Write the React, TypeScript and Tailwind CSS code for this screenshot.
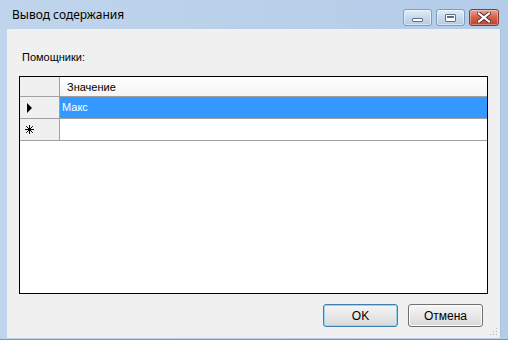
import React from "react";

const ui = { fontFamily: '"Liberation Sans", Arial, sans-serif' };
const title = { fontFamily: '"Noto Sans", "Open Sans", sans-serif' };

function CaptionButton({ kind }: { kind: "min" | "max" | "close" }) {
  if (kind === "close") {
    return (
      <div className="flex h-[17px] w-[30px] items-center justify-center rounded-[3px] border border-[#8a3a34] bg-gradient-to-b from-[#e8a493] via-[#d2614b] to-[#c0402c] shadow-[inset_0_0_0_1px_rgba(255,255,255,0.35)]">
        <svg width="14" height="11" viewBox="0 0 14 11">
          <path d="M2 1.5 L12 9.5 M12 1.5 L2 9.5" stroke="#5a2a22" strokeWidth="4" strokeLinecap="square" />
          <path d="M2 1.5 L12 9.5 M12 1.5 L2 9.5" stroke="#ffffff" strokeWidth="2.2" strokeLinecap="square" />
        </svg>
      </div>
    );
  }
  return (
    <div className="flex h-[17px] w-[29px] items-center justify-center rounded-[3px] border border-[#7f9db9] bg-gradient-to-b from-[#e3edf8] via-[#c7d9ee] to-[#b4cbe6] shadow-[inset_0_0_0_1px_rgba(255,255,255,0.5)]">
      {kind === "min" ? (
        <div className="mt-[4px] h-[4px] w-[11px] rounded-[1px] border border-[#5f6e80] bg-white" />
      ) : (
        <div className="h-[8px] w-[11px] rounded-[1px] border border-[#5f6e80] bg-white p-[1px]">
          <div className="h-full w-full border-t-2 border-[#5f6e80]" />
        </div>
      )}
    </div>
  );
}

function WinButton({ label, primary }: { label: string; primary?: boolean }) {
  return (
    <div
      className={
        "flex h-[23px] w-[75px] items-center justify-center rounded-[3px] border bg-gradient-to-b from-[#f6f6f6] via-[#e8e8e8] to-[#d8d8d8] text-[12px] text-black " +
        (primary
          ? "border-[#3c7fb1] shadow-[inset_0_0_0_1px_#9ad4f5]"
          : "border-[#707070] shadow-[inset_0_0_0_1px_#fcfcfc]")
      }
    >
      {label}
    </div>
  );
}

export default function App() {
  return (
    <div
      className="relative flex h-[340px] w-[508px] flex-col overflow-hidden bg-gradient-to-r from-[#c0d5ec] to-[#b3cce8] pb-[1px]"
      style={ui}
    >
      {/* title bar */}
      <div className="flex h-[29px] shrink-0 items-start justify-between pl-[12px] pr-[9px]">
        <span className="pt-[8px] text-[12px] leading-[14px] text-black" style={title}>
          Вывод содержания
        </span>
        <div className="flex gap-[4px] pt-[9px]">
          <CaptionButton kind="min" />
          <CaptionButton kind="max" />
          <CaptionButton kind="close" />
        </div>
      </div>

      {/* client */}
      <div className="mx-[7px] flex flex-1 flex-col bg-[#f0f0f0] border-r border-[#a8c1de]">
        <div className="pl-[15px] pt-[22px] text-[11px] leading-[12px] text-black">Помощники:</div>

        <div className="mx-[12px] mt-[13px] h-[218px] border border-black bg-white">
          <div className="flex h-[20px] border-b border-[#a0a0a0] bg-gradient-to-b from-white to-[#f4f4f4]">
            <div className="w-[40px] border-r border-[#a0a0a0] bg-[#f0f0f0]" />
            <div className="flex-1 pl-[7px] pt-[4px] text-[11px] leading-[12px] text-black">Значение</div>
          </div>
          <div className="flex h-[22px] border-b border-[#a0a0a0]">
            <div className="flex w-[40px] items-center border-r border-[#a0a0a0] bg-[#f0f0f0] pl-[7px]">
              <svg width="5" height="10" viewBox="0 0 5 10">
                <path d="M0 0 L5 5 L0 10 Z" fill="#000" />
              </svg>
            </div>
            <div className="flex flex-1 items-center bg-[#3399ff] pl-[2px] text-[11px] text-white">Макс</div>
          </div>
          <div className="flex h-[22px] border-b border-[#a0a0a0]">
            <div className="flex w-[40px] items-center border-r border-[#a0a0a0] bg-[#f0f0f0] pl-[5px]">
              <svg width="9" height="9" viewBox="0 0 9 9">
                <path d="M4.5 0 V9 M0 4.5 H9 M1.2 1.2 L7.8 7.8 M7.8 1.2 L1.2 7.8" stroke="#000" strokeWidth="1" />
              </svg>
            </div>
            <div className="flex-1 bg-white" />
          </div>
        </div>

        <div className="mt-[10px] flex justify-end gap-[10px] pr-[17px]">
          <WinButton label="OK" primary />
          <WinButton label="Отмена" />
        </div>

        <div className="mt-auto flex justify-end pb-[2px] pr-[2px]">
          <svg width="9" height="9" viewBox="0 0 9 9">
            <rect x="7" y="1" width="1" height="1" fill="#b8b8b8" />
            <rect x="4" y="4" width="1" height="1" fill="#b8b8b8" />
            <rect x="7" y="4" width="1" height="1" fill="#b8b8b8" />
            <rect x="1" y="7" width="1" height="1" fill="#b8b8b8" />
            <rect x="4" y="7" width="1" height="1" fill="#b8b8b8" />
            <rect x="7" y="7" width="1" height="1" fill="#b8b8b8" />
          </svg>
        </div>
      </div>
      <div className="h-[6px] shrink-0" />
      <div className="absolute inset-x-0 bottom-0 h-[1px] bg-[#3fa9e0]" />
    </div>
  );
}
